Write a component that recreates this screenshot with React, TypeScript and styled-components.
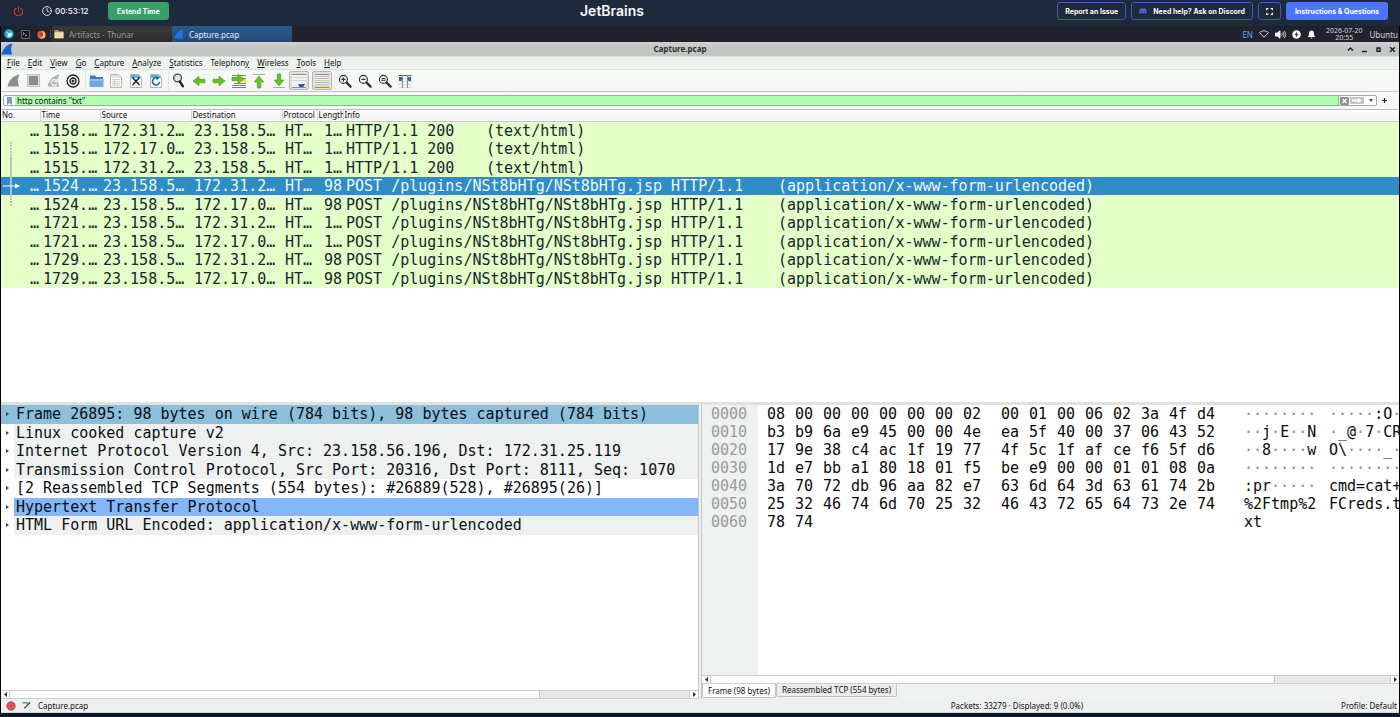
import React from "react";
import styled, { createGlobalStyle, css } from "styled-components";
import { FaDiscord } from "react-icons/fa";

const UI = `"Noto Sans", "Open Sans", sans-serif`;
const MONO = `"DejaVu Sans Mono", "Liberation Mono", monospace`;

const GlobalStyle = createGlobalStyle`
  *, *::before, *::after { box-sizing: border-box; }
  html, body { margin: 0; padding: 0; }
  body { background: #0f172a; }
  button, input { margin: 0; padding: 0; border: 0; background: none; font: inherit; color: inherit; }
  table { border-collapse: collapse; border-spacing: 0; }
  th, td { padding: 0; font-weight: inherit; text-align: left; }
  svg { display: block; flex: none; }
`;

const Page = styled.div`
  display: flex;
  flex-direction: column;
  min-height: 100vh;
  padding-bottom: 4px;
  background: #0f172a;
`;

/* ---------- lab header ---------- */

const LabBar = styled.header`
  display: grid;
  grid-template-columns: 1fr auto 1fr;
  align-items: center;
  height: 26px;
  padding: 0 12px 4px;
  background: #1e293b;
  color: #f8fafc;
  font-family: Inter, sans-serif;
`;

const LabSide = styled.div<{ $end?: boolean }>`
  display: flex;
  align-items: center;
  gap: ${(p) => (p.$end ? 5 : 17)}px;
  justify-content: ${(p) => (p.$end ? "flex-end" : "flex-start")};
`;

const LabTitle = styled.h1`
  margin: 0;
  padding-right: 176px;
  font-size: 14px;
  line-height: 20px;
  font-weight: 600;
`;

const PowerButton = styled.button`
  display: flex;
  width: 13px;
  justify-content: center;
`;

const Timer = styled.div`
  display: flex;
  align-items: center;
  gap: 3px;
  min-width: 49px;
  font-size: 8px;
  font-weight: 500;
`;

const LabButton = styled.button<{ $tone: "green" | "blue" | "outline" }>`
  display: flex;
  align-items: center;
  justify-content: center;
  gap: 6px;
  height: 18px;
  padding: 0 ${(p) => (p.$tone === "outline" ? 7 : 9)}px;
  border-radius: 3px;
  font-size: 7px;
  font-weight: 700;
  white-space: nowrap;
  color: #fff;
  ${(p) =>
    p.$tone === "green"
      ? css`background: #38a169;`
      : p.$tone === "blue"
      ? css`background: #4c74ff;`
      : css`border: 1px solid #3a5bc4;`}
`;

/* ---------- remote desktop ---------- */

const Desktop = styled.main`
  display: flex;
  flex: 1;
  flex-direction: column;
  min-width: 0;
  border: solid #000;
  border-width: 0 1px;
  background: #eff2f0;
  color: #111;
  font-family: ${UI};
  font-size: 8px;
`;

const TaskBar = styled.nav`
  display: flex;
  align-items: center;
  height: 16px;
  background: #20222e;
  color: #d5d7da;
`;

const Launcher = styled.button`
  display: flex;
  justify-content: center;
  width: 16px;
`;

const Task = styled.button<{ $active?: boolean }>`
  display: flex;
  align-items: center;
  gap: 5px;
  width: 120px;
  height: 16px;
  padding-left: 2px;
  color: ${(p) => (p.$active ? "#e9eef4" : "#9b9b9b")};
  background: ${(p) => (p.$active ? "linear-gradient(#2c5a8e, #234a77)" : "linear-gradient(#383838, #2c2c2c)")};
`;

const Tray = styled.div`
  display: flex;
  align-items: center;
  gap: 6px;
  margin-left: auto;
  padding-right: 1px;
`;

const Language = styled.span`
  color: #4fb6e3;
`;

const Clock = styled.time`
  padding: 0 1px 0 4px;
  font-size: 7px;
  line-height: 7px;
  text-align: center;
`;

const TitleBar = styled.div`
  display: grid;
  grid-template-columns: 20px 1fr 60px;
  align-items: center;
  height: 15px;
  background: linear-gradient(#d3cfd1, #c3c7c3 40%, #c3c7c3);
  border-bottom: 1px solid #d7dad7;
`;

const WindowTitle = styled.h2`
  margin: 0;
  color: #303030;
  font-size: 8px;
  font-weight: 700;
  line-height: 12px;
  text-align: center;
`;

const WindowButtons = styled.div`
  display: flex;
  justify-content: flex-end;
  gap: 5px;
  padding-right: 2px;
`;

const IconButton = styled.button`
  display: flex;
  align-items: center;
  justify-content: center;
`;

const MenuBar = styled.nav`
  display: flex;
  align-items: center;
  gap: 8px;
  height: 12px;
  padding-left: 6px;
  background: #eef2ee;
`;

const MenuItem = styled.button`
  line-height: 12px;
  white-space: nowrap;
  u { text-underline-offset: 1px; }
`;

const ToolBar = styled.div`
  display: flex;
  align-items: center;
  gap: 3px;
  height: 23px;
  padding-left: 2px;
  border-top: 1px solid #dcdfdc;
  border-bottom: 1px solid #c4c7c4;
  background: linear-gradient(#f6faf6, #f5f5f5);
`;

const ToolGroup = styled.div`
  display: flex;
  align-items: center;
  & + & { box-shadow: -1px 0 0 #e4e6e4; }
`;

const Tool = styled.button<{ $pressed?: boolean }>`
  display: flex;
  align-items: center;
  justify-content: center;
  width: 20px;
  height: 19px;
  ${(p) =>
    p.$pressed &&
    css`
      border: 1px solid #b4b7b4;
      border-radius: 2px;
      background: #dfe1df;
      &:last-child { margin-left: 3px; }
    `}
`;

const FilterBar = styled.form`
  display: flex;
  align-items: center;
  height: 18px;
  padding: 0 12px 0 2px;
  border-bottom: 1px solid #b9bcb9;
  background: #f6f8f6;
`;

const FilterBox = styled.div`
  display: flex;
  flex: 1;
  align-items: center;
  height: 11px;
  border: 1px solid #a4a7a4;
  border-radius: 2px;
  background: #fff;
`;

const Bookmark = styled.button`
  display: flex;
  align-items: center;
  justify-content: center;
  width: 11px;
  height: 9px;
`;

const FilterInput = styled.input`
  flex: 1;
  height: 9px;
  min-width: 0;
  padding-left: 2px;
  border-right: 1px solid #83b883;
  background: #afffaf;
  line-height: 9px;
  outline: none;
`;

const FilterActions = styled.div`
  display: flex;
  align-items: center;
  gap: 1px;
  width: 37px;
  padding-left: 1px;
`;

const AddFilter = styled.button`
  display: flex;
  padding-left: 5px;
`;

/* ---------- packet list ---------- */

const ListPane = styled.section`
  flex: 293 1 0;
  overflow: hidden;
  background: #fff;
`;

const Packets = styled.table`
  width: 100%;
  table-layout: fixed;
`;

const HeadRow = styled.tr`
  height: 11px;
  background: linear-gradient(#fff, #f0f2f0);
  border-bottom: 1px solid #c4c7c4;
`;

const HeadCell = styled.th`
  height: 11px;
  padding-left: 1px;
  overflow: hidden;
  line-height: 10px;
  white-space: nowrap;
  & + & { border-left: 1px solid #d3d6d3; }
`;

const PacketBody = styled.tbody`
  font-family: ${MONO};
  font-size: 15px;
  line-height: 18px;
`;

const PacketRow = styled.tr<{ $selected?: boolean; $tall?: boolean }>`
  height: ${(p) => (p.$tall ? 19 : 18)}px;
  color: ${(p) => (p.$selected ? "#eef6fb" : "#12272e")};
  background: ${(p) => (p.$selected ? "#308cc6" : "#e4ffc7")};
`;

const Cell = styled.td<{ $right?: boolean }>`
  position: relative;
  padding: 0 1px 0 3px;
  overflow: hidden;
  text-align: ${(p) => (p.$right ? "right" : "left")};
  white-space: pre;
`;

const Relation = styled.svg`
  position: absolute;
  top: 0;
  left: 0;
  width: 24px;
  height: 100%;
`;

const InfoPart = styled.span<{ $width: number }>`
  display: inline-block;
  min-width: ${(p) => p.$width}px;
`;

/* ---------- lower panes ---------- */

const LowerPanes = styled.section`
  display: flex;
  flex: 296 1 0;
  min-height: 0;
  border-top: 3px solid #dfe2df;
`;

const DetailsPane = styled.div`
  display: flex;
  flex: 697 1 0;
  flex-direction: column;
  min-width: 0;
  background: #fff;
`;

const Tree = styled.ul`
  flex: 1;
  margin: 0;
  padding: 0;
  overflow: hidden;
  list-style: none;
  font-family: ${MONO};
  font-size: 15px;
`;

const TreeRow = styled.li<{ $kind: "focus" | "plain" | "white" | "http"; $tall?: boolean }>`
  display: flex;
  align-items: center;
  height: ${(p) => (p.$tall ? 19 : 18)}px;
  color: #0a0f12;
  background: ${(p) => (p.$kind === "focus" ? "#8cbfdc" : "#fff")};
  > span {
    flex: 1;
    height: 100%;
    padding-left: 2px;
    overflow: hidden;
    line-height: 19px;
    white-space: pre;
    background: ${(p) => ({ focus: "#8cbfdc", plain: "#eef1ef", white: "#fff", http: "#83b7fa" }[p.$kind])};
  }
`;

const Twisty = styled.button`
  display: flex;
  align-items: center;
  justify-content: center;
  width: 13px;
  height: 100%;
`;

const BytesPane = styled.div`
  display: flex;
  flex: 697 1 0;
  flex-direction: column;
  min-width: 0;
  border-left: 4px double #c3c6c3;
`;

const HexView = styled.div`
  display: flex;
  flex: 1;
  overflow: hidden;
  background: linear-gradient(90deg, #eef1ef 56px, #fff 56px);
`;

const HexTable = styled.table`
  align-self: flex-start;
  width: 700px;
  flex: none;
  table-layout: fixed;
  font-family: ${MONO};
  font-size: 15px;
  line-height: 18px;
  color: #0a0a0a;
  td, th { height: 18px; white-space: pre; }
  th { padding-left: 9px; color: #999d9b; }
`;

const Dim = styled.span`
  color: #8d8d8d;
`;

const ScrollBar = styled.div`
  display: flex;
  height: 9px;
  border: solid #cdd0cd;
  border-width: 1px 0;
  background: #e6e9e6;
`;

const ScrollArrow = styled.button`
  display: flex;
  align-items: center;
  justify-content: center;
  width: 8px;
  background: #fafbfa;
`;

const ScrollTrack = styled.div`
  flex: 1;
  border: solid #c9ccc9;
  border-width: 0 1px;
`;

const ScrollThumb = styled.div`
  height: 100%;
  border-right: 1px solid #c0c3c0;
  background: #fbfdfb;
`;

const Tabs = styled.div`
  display: flex;
  align-items: flex-start;
  height: 15px;
`;

const Tab = styled.button<{ $active?: boolean }>`
  height: ${(p) => (p.$active ? 14 : 13)}px;
  padding: 0 5px;
  border: solid #c0c3c0;
  border-width: 0 1px 1px;
  border-radius: 0 0 2px 2px;
  background: ${(p) => (p.$active ? "#fff" : "#ececec")};
  line-height: 12px;
  white-space: nowrap;
`;

const StatusBar = styled.footer`
  display: grid;
  grid-template-columns: 949fr 390fr auto;
  align-items: center;
  height: 14px;
  padding-right: 2px;
  border-bottom: 1px solid #d8dad8;
  background: #edf0ed;
`;

const StatusLeft = styled.div`
  display: flex;
  align-items: center;
  gap: 6px;
  padding-left: 5px;
`;

const StatusFile = styled.span`
  padding-left: 1px;
`;

/* ---------- drawings ---------- */

const Fin = ({ size = 12, fill = "#1f62cf" }: { size?: number; fill?: string }) => (
  <svg width={size} height={size} viewBox="0 0 12 12">
    <path d="M0.5 11.5C2 5.5 5.5 1.5 11.5 0.5C9.6 4 9.7 8 11.3 11.5Z" fill={fill} />
  </svg>
);

const Doc = ({ children, top = "#9fc9ee" }: { children?: React.ReactNode; top?: string }) => (
  <svg width="14" height="16" viewBox="0 0 14 16">
    <path d="M1.5 1.5H9.5L12.5 4.5V14.5H1.5Z" fill="#fbfbf6" stroke="#b5b7b2" />
    <path d="M2 2H9.5L12 4.5V5H2Z" fill={top} />
    {children}
  </svg>
);

const Arrow = ({ rotate = 0 }: { rotate?: number }) => (
  <path
    transform={`rotate(${rotate} 8 8)`}
    d="M2 6.3H8V3.2L14 8L8 12.8V9.7H2Z"
    fill="#62c31a"
    stroke="#5a9a35"
    strokeWidth="0.7"
  />
);

const Lens = ({ children }: { children?: React.ReactNode }) => (
  <svg width="14" height="14" viewBox="0 0 14 14" fill="none" stroke="#2b2e2c">
    <circle cx="5.4" cy="5.4" r="4" fill="#eef0ee" strokeWidth="1.1" />
    <path d="M8.6 8.6L12.6 12.6" strokeWidth="2.2" strokeLinecap="round" />
    {children}
  </svg>
);

const Square16 = ({ children }: { children: React.ReactNode }) => (
  <svg width="16" height="16" viewBox="0 0 16 16">
    {children}
  </svg>
);

const tools: { label: string; pressed?: boolean; icon: React.ReactNode }[][] = [
  [
    { label: "Start capture", icon: <Fin size={13} fill="#8e908e" /> },
    {
      label: "Stop capture",
      icon: (
        <svg width="13" height="13" viewBox="0 0 13 13">
          <rect x="0.5" y="0.5" width="12" height="12" fill="#d9dad9" stroke="#c4c6c4" />
          <rect x="2" y="2" width="9" height="9" fill="#8a8c8a" />
        </svg>
      ),
    },
    {
      label: "Restart capture",
      icon: (
        <svg width="13" height="13" viewBox="0 0 12 12">
          <path d="M0.5 11.5C2 5.5 5.5 1.5 11.5 0.5C9.6 4 9.7 8 11.3 11.5Z" fill="#b3b5b3" />
          <path d="M8.7 6.2A2.6 2.6 0 1 0 9 9M9.3 4.6V6.9H7" fill="none" stroke="#f4f4f4" strokeWidth="1.2" />
        </svg>
      ),
    },
    {
      label: "Capture options",
      icon: (
        <svg width="14" height="14" viewBox="0 0 14 14" fill="none" stroke="#1d1f1e">
          <circle cx="7" cy="7" r="6" strokeWidth="1.3" />
          <circle cx="7" cy="7" r="3" strokeWidth="1.3" />
          <circle cx="7" cy="7" r="1" fill="#1d1f1e" />
        </svg>
      ),
    },
  ],
  [
    {
      label: "Open",
      icon: (
        <svg width="15" height="14" viewBox="0 0 15 14">
          <path d="M1 1.5H6L7 3H14V12.5H1Z" fill="#3f78bd" />
          <path d="M0.5 5H14.5V13H0.5Z" fill="#6fa8ea" />
          <path d="M0.5 5H14.5V7H0.5Z" fill="#93c0f4" />
        </svg>
      ),
    },
    {
      label: "Save",
      icon: (
        <Doc top="#e2e3e0">
          <path d="M3 6.5H11M3 8.5H11M3 10.5H11M3 12.5H11M5.5 6V13" stroke="#c4c6c3" strokeWidth="0.8" />
        </Doc>
      ),
    },
    {
      label: "Close",
      icon: (
        <Doc top="#5cb0e8">
          <path d="M3.5 4.5L10.5 12M10.5 4.5L3.5 12" stroke="#20262c" strokeWidth="1.6" />
        </Doc>
      ),
    },
    {
      label: "Reload",
      icon: (
        <Doc top="#5cb0e8">
          <path d="M9.5 5.8A3.6 3.6 0 1 0 10.6 9" fill="none" stroke="#1f5fa8" strokeWidth="1.5" />
          <path d="M6.6 3.4L10.4 4.5L8 7.2Z" fill="#1f5fa8" />
        </Doc>
      ),
    },
  ],
  [
    {
      label: "Find",
      icon: (
        <svg width="14" height="15" viewBox="0 0 14 15" fill="none">
          <circle cx="5.6" cy="5" r="3.9" fill="#dfe3e1" stroke="#404341" strokeWidth="1.3" />
          <path d="M7.8 8.6L10.8 13.2" stroke="#1c1e1d" strokeWidth="2.4" strokeLinecap="round" />
        </svg>
      ),
    },
    { label: "Previous packet", icon: <Square16><Arrow rotate={180} /></Square16> },
    { label: "Next packet", icon: <Square16><Arrow /></Square16> },
    {
      label: "Go to packet",
      icon: (
        <Square16>
          <path d="M1 2.5H15M1 12.5H15M1 14.5H15M3 10.5H15M10 5.5H15" stroke="#7d807e" strokeWidth="1" />
          <path d="M9 7.5H15" stroke="#f2e34a" strokeWidth="3" />
          <g transform="translate(-1 -2)"><Arrow /></g>
        </Square16>
      ),
    },
    {
      label: "First packet",
      icon: <Square16><path d="M2 1.5H14" stroke="#a9aca9" /><g transform="translate(0 1)"><Arrow rotate={-90} /></g></Square16>,
    },
    {
      label: "Last packet",
      icon: <Square16><path d="M2 14.5H14" stroke="#a9aca9" /><g transform="translate(0 -1)"><Arrow rotate={90} /></g></Square16>,
    },
    {
      label: "Auto scroll",
      pressed: true,
      icon: (
        <Square16>
          <path d="M1 1.5H15M1 14.5H15" stroke="#8b8e8b" />
          <path d="M1 2H15V14H1Z" fill="#f1f2f0" />
          <path d="M1.5 4.5H14.5M1.5 7.5H14.5" stroke="#d3d6d3" />
          <path d="M7 11H14L12.5 14H8.5Z" fill="#2d5f9e" />
        </Square16>
      ),
    },
    {
      label: "Colorize",
      pressed: true,
      icon: (
        <Square16>
          <path d="M1 1H15V15H1Z" fill="#f4f4f2" />
          <path d="M1 1.5H15" stroke="#8b8e8b" />
          <path d="M1 3.5H15" stroke="#f0a29c" />
          <path d="M1 5.5H15" stroke="#9db8ec" />
          <path d="M1 7.5H15" stroke="#aadf93" />
          <path d="M1 9.5H15" stroke="#a5abe0" />
          <path d="M1 11.5H15" stroke="#d4b8e0" />
          <path d="M1 13H15" stroke="#eee27c" strokeWidth="2" />
          <path d="M1 14.5H15" stroke="#8b8e8b" />
        </Square16>
      ),
    },
  ],
  [
    { label: "Zoom in", icon: <Lens><path d="M3.4 5.4H7.4M5.4 3.4V7.4" strokeWidth="1.2" /></Lens> },
    { label: "Zoom out", icon: <Lens><path d="M3.4 5.4H7.4" strokeWidth="1.2" /></Lens> },
    { label: "Normal size", icon: <Lens><path d="M3.4 4.6H7.4M3.4 6.3H7.4" strokeWidth="1" /></Lens> },
    {
      label: "Resize columns",
      icon: (
        <svg width="14" height="14" viewBox="0 0 14 14">
          <path d="M0.5 1.5H13.5" stroke="#5d605e" />
          <path d="M0.5 4.5H13.5M0.5 7.5H13.5M0.5 10.5H13.5M0.5 13.5H13.5" stroke="#d4d7d4" />
          <path d="M4.5 1V14M9.5 1V14" stroke="#8b8e8b" />
          <path d="M1 3H3.5L4.5 5L3.5 7H1ZM13 3H10.5L9.5 5L10.5 7H13Z" fill="#2568b0" />
        </svg>
      ),
    },
  ],
];

const menus: [string, string, string][] = [
  ["", "F", "ile"],
  ["", "E", "dit"],
  ["", "V", "iew"],
  ["", "G", "o"],
  ["", "C", "apture"],
  ["", "A", "nalyze"],
  ["", "S", "tatistics"],
  ["Telephon", "y", ""],
  ["", "W", "ireless"],
  ["", "T", "ools"],
  ["", "H", "elp"],
];

/* ---------- data ---------- */

const POST = "POST /plugins/NSt8bHTg/NSt8bHTg.jsp HTTP/1.1";
const FORM = "(application/x-www-form-urlencoded)";
const OK = "HTTP/1.1 200";
const HTML = "(text/html)";

type Packet = { time: string; src: string; dst: string; len: string; info: string; type: string; link?: "start" | "mid" | "here" | "end" };

const packets: Packet[] = [
  { time: "1158.…", src: "172.31.2…", dst: "23.158.5…", len: "1…", info: OK, type: HTML },
  { time: "1515.…", src: "172.17.0…", dst: "23.158.5…", len: "1…", info: OK, type: HTML, link: "start" },
  { time: "1515.…", src: "172.31.2…", dst: "23.158.5…", len: "1…", info: OK, type: HTML, link: "mid" },
  { time: "1524.…", src: "23.158.5…", dst: "172.31.2…", len: "98", info: POST, type: FORM, link: "here" },
  { time: "1524.…", src: "23.158.5…", dst: "172.17.0…", len: "98", info: POST, type: FORM, link: "end" },
  { time: "1721.…", src: "23.158.5…", dst: "172.31.2…", len: "1…", info: POST, type: FORM },
  { time: "1721.…", src: "23.158.5…", dst: "172.17.0…", len: "1…", info: POST, type: FORM },
  { time: "1729.…", src: "23.158.5…", dst: "172.31.2…", len: "98", info: POST, type: FORM },
  { time: "1729.…", src: "23.158.5…", dst: "172.17.0…", len: "98", info: POST, type: FORM },
];

const details: [string, "focus" | "plain" | "white" | "http"][] = [
  ["Frame 26895: 98 bytes on wire (784 bits), 98 bytes captured (784 bits)", "focus"],
  ["Linux cooked capture v2", "plain"],
  ["Internet Protocol Version 4, Src: 23.158.56.196, Dst: 172.31.25.119", "plain"],
  ["Transmission Control Protocol, Src Port: 20316, Dst Port: 8111, Seq: 1070", "plain"],
  ["[2 Reassembled TCP Segments (554 bytes): #26889(528), #26895(26)]", "white"],
  ["Hypertext Transfer Protocol", "http"],
  ["HTML Form URL Encoded: application/x-www-form-urlencoded", "plain"],
];

const hexRows: [string, string, string, string][] = [
  ["0000", "08 00 00 00 00 00 00 02 00 01 00 06 02 3a 4f d4", "········", "·····:O·"],
  ["0010", "b3 b9 6a e9 45 00 00 4e ea 5f 40 00 37 06 43 52", "··j·E··N", "·_@·7·CR"],
  ["0020", "17 9e 38 c4 ac 1f 19 77 4f 5c 1f af ce f6 5f d6", "··8····w", "O\\····_·"],
  ["0030", "1d e7 bb a1 80 18 01 f5 be e9 00 00 01 01 08 0a", "········", "········"],
  ["0040", "3a 70 72 db 96 aa 82 e7 63 6d 64 3d 63 61 74 2b", ":pr·····", "cmd=cat+"],
  ["0050", "25 32 46 74 6d 70 25 32 46 43 72 65 64 73 2e 74", "%2Ftmp%2", "FCreds.t"],
  ["0060", "78 74", "xt", ""],
];

const Ascii = ({ text }: { text: string }) => (
  <>
    {text.split(/(·+)/).map((part, i) => (part.startsWith("·") ? <Dim key={i}>{part}</Dim> : part))}
  </>
);

const RelationMark = ({ link }: { link: NonNullable<Packet["link"]> }) => (
  <Relation aria-hidden="true">
    <line
      x1="10"
      x2="10"
      y1={link === "start" ? "10%" : "0"}
      y2={link === "end" ? "60%" : "100%"}
      stroke={link === "here" ? "#9cc4de" : "#b8c8a8"}
      strokeWidth="2"
      strokeDasharray={link === "mid" || link === "here" ? undefined : "2 1"}
    />
    {link === "here" && (
      <>
        <line x1="2" x2="16" y1="50%" y2="50%" stroke="#fff" />
        <path d="M14 6.5L19 9L14 11.5Z" fill="#fff" />
      </>
    )}
  </Relation>
);

const HScroll = ({ thumb }: { thumb: number }) => (
  <ScrollBar>
    <ScrollArrow type="button" aria-label="Scroll left">
      <svg width="3" height="5" viewBox="0 0 3 5"><path d="M3 0V5L0 2.5Z" fill="#333" /></svg>
    </ScrollArrow>
    <ScrollTrack>
      <ScrollThumb style={{ width: `${thumb}%` }} />
    </ScrollTrack>
    <ScrollArrow type="button" aria-label="Scroll right">
      <svg width="3" height="5" viewBox="0 0 3 5"><path d="M0 0V5L3 2.5Z" fill="#333" /></svg>
    </ScrollArrow>
  </ScrollBar>
);

export default function App() {
  return (
    <Page>
      <GlobalStyle />
      <LabBar>
        <LabSide>
          <LabSide>
            <PowerButton type="button" aria-label="Power off">
              <svg width="11" height="11" viewBox="0 0 12 12" fill="none" stroke="#e02f35" strokeWidth="1.2" strokeLinecap="round">
                <path d="M6 0.8V5.6M3.2 2.4A4.6 4.6 0 1 0 8.8 2.4" />
              </svg>
            </PowerButton>
            <Timer>
              <svg width="10" height="10" viewBox="0 0 10 10" fill="none" stroke="#e8edf4" strokeWidth="0.9" strokeLinecap="round">
                <circle cx="5" cy="5" r="4.4" />
                <path d="M5 2.3V5L6.8 6" />
              </svg>
              00:53:12
            </Timer>
          </LabSide>
          <LabButton type="button" $tone="green">Extend Time</LabButton>
        </LabSide>
        <LabTitle>JetBrains</LabTitle>
        <LabSide $end>
          <LabButton type="button" $tone="outline">Report an Issue</LabButton>
          <LabButton type="button" $tone="outline">
            <FaDiscord size={8} color="#5865f2" />
            Need help? Ask on Discord
          </LabButton>
          <LabButton type="button" $tone="outline" aria-label="Full screen">
            <svg width="7" height="7" viewBox="0 0 8 8" fill="none" stroke="#fff" strokeWidth="1.2">
              <path d="M0.7 2.7V0.7H2.7M5.3 0.7H7.3V2.7M7.3 5.3V7.3H5.3M2.7 7.3H0.7V5.3" />
            </svg>
          </LabButton>
          <LabButton type="button" $tone="blue">Instructions &amp; Questions</LabButton>
        </LabSide>
      </LabBar>

      <Desktop>
        <TaskBar>
          <Launcher type="button" aria-label="Applications">
            <svg width="10" height="10" viewBox="0 0 10 10">
              <circle cx="5" cy="5" r="4.7" fill="#29a9df" />
              <path d="M2 3L5 4.2L7.6 3.2L8 6L5.4 8.2L3 7L4.2 5.6Z" fill="#e9f7fd" />
            </svg>
          </Launcher>
          <Launcher type="button" aria-label="Terminal">
            <svg width="9" height="9" viewBox="0 0 9 9">
              <rect x="0.5" y="0.5" width="8" height="8" fill="#15171a" stroke="#77797c" strokeWidth="0.8" />
              <path d="M2 2.5L3.4 3.6L2 4.7M4 5.3H6" fill="none" stroke="#e8e8e8" strokeWidth="0.8" />
            </svg>
          </Launcher>
          <Launcher type="button" aria-label="Firefox">
            <svg width="9" height="9" viewBox="0 0 9 9">
              <circle cx="4.5" cy="4.8" r="4.1" fill="#f2542d" />
              <path d="M5 0.4C8 1.5 9.4 5 7.6 7.4C6 9 3.6 8.6 3 7.8C6 7.6 7 4 5 0.4Z" fill="#ffc63a" />
              <circle cx="4.3" cy="4.8" r="1.8" fill="#7b3fc4" />
            </svg>
          </Launcher>
          <svg width="3" height="8" viewBox="0 0 3 8"><path d="M1.5 0V8" stroke="#77797f" strokeWidth="1" strokeDasharray="1.4 1.4" /></svg>
          <Task type="button">
            <svg width="10" height="10" viewBox="0 0 10 10">
              <path d="M0.5 1H4L5 2.2H9.5V9H0.5Z" fill="#b99a62" />
              <path d="M0.5 3.2H9.5V9.4H0.5Z" fill="#efd9a4" />
            </svg>
            Artifacts - Thunar
          </Task>
          <Task type="button" $active>
            <Fin size={10} fill="#1f74e8" />
            Capture.pcap
          </Task>
          <Tray>
            <Language>EN</Language>
            <svg width="10" height="8" viewBox="0 0 10 8" fill="none" stroke="#e4e6ea" strokeWidth="0.9"><path d="M0.6 2.6C3 0.3 7 0.3 9.4 2.6L5 7.4Z" /></svg>
            <svg width="11" height="9" viewBox="0 0 11 9" fill="none" stroke="#f2f3f5" strokeWidth="1">
              <path d="M0.5 3H2.4L5 0.8V8.2L2.4 6H0.5Z" fill="#f2f3f5" />
              <path d="M6.6 3C7.2 4 7.2 5 6.6 6M8 1.8C9.2 3.6 9.2 5.4 8 7.2M9.4 0.8C10.8 3.2 10.8 5.8 9.4 8.2" strokeWidth="0.8" />
            </svg>
            <svg width="9" height="9" viewBox="0 0 9 9"><circle cx="4.5" cy="4.5" r="4.3" fill="#f7f8f9" /><path d="M5.2 1.4L2.6 5H4.3L3.8 7.6L6.4 4H4.7Z" fill="#20222e" /></svg>
            <svg width="9" height="9" viewBox="0 0 9 9"><path d="M4.5 0.4C6.4 0.6 7 2 7 3.6C7 5.4 7.4 6 8.4 7H0.6C1.6 6 2 5.4 2 3.6C2 2 2.6 0.6 4.5 0.4ZM3.4 7.5H5.6C5.4 8.8 3.6 8.8 3.4 7.5Z" fill="#f2f3f5" /></svg>
            <Clock>2026-07-20<br />20:55</Clock>
            <span>Ubuntu</span>
          </Tray>
        </TaskBar>

        <TitleBar>
          <Fin size={12} fill="#1c5fd0" />
          <WindowTitle>Capture.pcap</WindowTitle>
          <WindowButtons>
            {[
              ["Roll up", "M2 5.5L4.5 3L7 5.5"],
              ["Minimize", "M2 6.5H7"],
              ["Maximize", "M3 3H6V6.2H3Z"],
              ["Close", "M2.2 2.2L6.8 6.8M6.8 2.2L2.2 6.8"],
            ].map(([label, d]) => (
              <IconButton type="button" key={label} aria-label={label}>
                <svg width="9" height="9" viewBox="0 0 9 9" fill="none" stroke="#1b1d1c" strokeWidth="1.4"><path d={d} /></svg>
              </IconButton>
            ))}
          </WindowButtons>
        </TitleBar>

        <MenuBar>
          {menus.map(([pre, key, post]) => (
            <MenuItem type="button" key={pre + key + post}>{pre}<u>{key}</u>{post}</MenuItem>
          ))}
        </MenuBar>

        <ToolBar role="toolbar">
          {tools.map((group, i) => (
            <ToolGroup key={i}>
              {group.map((t) => (
                <Tool type="button" key={t.label} aria-label={t.label} $pressed={t.pressed}>{t.icon}</Tool>
              ))}
            </ToolGroup>
          ))}
        </ToolBar>

        <FilterBar onSubmit={(e) => e.preventDefault()}>
          <FilterBox>
            <Bookmark type="button" aria-label="Filter bookmarks">
              <svg width="5" height="8" viewBox="0 0 5 8"><path d="M0 0H5V8L2.5 6L0 8Z" fill="#6f9cc9" /></svg>
            </Bookmark>
            <FilterInput aria-label="Display filter" defaultValue={'http contains "txt"'} spellCheck={false} />
            <FilterActions>
              <IconButton type="button" aria-label="Clear filter">
                <svg width="9" height="8" viewBox="0 0 9 8"><rect width="9" height="8" rx="1" fill="#8d908d" /><path d="M2.5 2L6.5 6M6.5 2L2.5 6" stroke="#fff" strokeWidth="1.2" /></svg>
              </IconButton>
              <IconButton type="button" aria-label="Apply filter">
                <svg width="14" height="7" viewBox="0 0 14 7"><rect width="14" height="7" rx="1" fill="#c0c3c0" /><path d="M2 2.5H8V1L12 3.5L8 6V4.5H2Z" fill="#fff" /></svg>
              </IconButton>
              <IconButton type="button" aria-label="Recent filters">
                <svg width="11" height="7" viewBox="0 0 11 7"><path d="M4 2H8L6 5Z" fill="#444" /></svg>
              </IconButton>
            </FilterActions>
          </FilterBox>
          <AddFilter type="button" aria-label="Add filter button">
            <svg width="5" height="5" viewBox="0 0 5 5"><path d="M2.5 0V5M0 2.5H5" stroke="#222" strokeWidth="1.2" /></svg>
          </AddFilter>
        </FilterBar>

        <ListPane>
          <Packets>
            <colgroup>
              {[39, 60, 91, 91, 35, 26].map((w, i) => <col key={i} width={w} />)}
              <col />
            </colgroup>
            <thead>
              <HeadRow>
                {["No.", "Time", "Source", "Destination", "Protocol", "Length", "Info"].map((h) => <HeadCell key={h} scope="col">{h}</HeadCell>)}
              </HeadRow>
            </thead>
            <PacketBody>
              {packets.map((p, i) => (
                <PacketRow key={i} $selected={p.link === "here"} $tall={i % 2 === 0}>
                  <Cell $right>{p.link && <RelationMark link={p.link} />}…</Cell>
                  <Cell>{p.time}</Cell>
                  <Cell>{p.src}</Cell>
                  <Cell>{p.dst}</Cell>
                  <Cell>HT…</Cell>
                  <Cell $right>{p.len}</Cell>
                  <Cell><InfoPart $width={p.type === HTML ? 140 : 432}>{p.info}</InfoPart>{p.type}</Cell>
                </PacketRow>
              ))}
            </PacketBody>
          </Packets>
        </ListPane>

        <LowerPanes>
          <DetailsPane>
            <Tree>
              {details.map(([text, kind], i) => (
                <TreeRow key={text} $kind={kind} $tall={i % 2 === 0}>
                  <Twisty type="button" aria-label="Expand">
                    <svg width="3" height="4" viewBox="0 0 3 4"><path d="M0 0V4L3 2Z" fill="#444" /></svg>
                  </Twisty>
                  <span>{text}</span>
                </TreeRow>
              ))}
            </Tree>
            <HScroll thumb={78} />
          </DetailsPane>
          <BytesPane>
            <HexView>
              <HexTable>
                <colgroup>
                  <col width={65} />
                  {Array.from({ length: 16 }, (_, i) => <col key={i} width={i === 7 ? 38 : i === 15 ? 47 : 28} />)}
                  <col width={85} />
                  <col />
                </colgroup>
                <tbody>
                  {hexRows.map(([offset, bytes, a, b]) => {
                    const cells = bytes.split(" ");
                    return (
                      <tr key={offset}>
                        <th scope="row">{offset}</th>
                        {Array.from({ length: 16 }, (_, i) => <td key={i}>{cells[i]}</td>)}
                        <td><Ascii text={a} /></td>
                        <td><Ascii text={b} /></td>
                      </tr>
                    );
                  })}
                </tbody>
              </HexTable>
            </HexView>
            <HScroll thumb={83} />
            <Tabs role="tablist">
              <Tab type="button" role="tab" $active aria-selected>Frame (98 bytes)</Tab>
              <Tab type="button" role="tab" aria-selected={false}>Reassembled TCP (554 bytes)</Tab>
            </Tabs>
          </BytesPane>
        </LowerPanes>

        <StatusBar>
          <StatusLeft>
            <svg width="10" height="10" viewBox="0 0 10 10"><circle cx="5" cy="5" r="4.2" fill="#e05252" stroke="#8d4a4a" strokeWidth="0.8" /></svg>
            <svg width="9" height="9" viewBox="0 0 9 9"><path d="M0.5 1H6V8H0.5Z" fill="#eef3f6" /><path d="M0.5 1H6V2.6H0.5Z" fill="#3f9ad8" /><path d="M2.4 7.4L8 1.4" stroke="#333" strokeWidth="1.3" /></svg>
            <StatusFile>Capture.pcap</StatusFile>
          </StatusLeft>
          <span>Packets: 33279 · Displayed: 9 (0.0%)</span>
          <span>Profile: Default</span>
        </StatusBar>
      </Desktop>
    </Page>
  );
}
